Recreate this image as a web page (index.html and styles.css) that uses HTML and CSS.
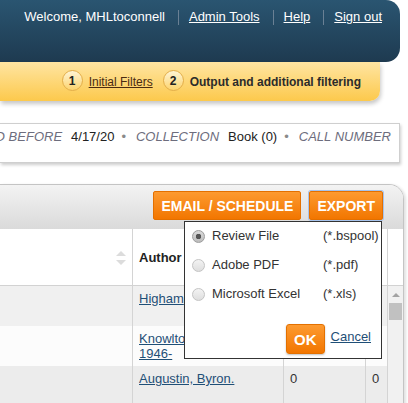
FILE: index.html
```html
<!DOCTYPE html>
<html>
<head>
    <meta name="viewport" content="width=device-width, initial-scale=1.0">
    <title>Report Output</title>
    <link rel="stylesheet" href="styles.css">
</head>
<body>
    <div class="topbar">
        <span>Welcome, MHLtoconnell</span>
        <span class="sep"></span>
        <a href="#">Admin Tools</a>
        <span class="sep"></span>
        <a href="#">Help</a>
        <span class="sep"></span>
        <a href="#">Sign out</a>
    </div>

    <div class="steps">
        <span class="step-num">1</span>
        <a href="#" class="step-link">Initial Filters</a>
        <span class="step-num">2</span>
        <span class="step-current">Output and additional filtering</span>
    </div>

    <div class="filters">
        <span class="label">CREATED BEFORE</span><span class="value">4/17/20</span><span class="dot">&bull;</span>
        <span class="label">COLLECTION</span><span class="value">Book (0)</span><span class="dot">&bull;</span>
        <span class="label">CALL NUMBER</span>
    </div>

    <div class="panel">
        <div class="toolbar">
            <button class="btn">EMAIL / SCHEDULE</button>
            <button class="btn focused">EXPORT</button>
        </div>

        <table class="results">
            <thead>
                <tr>
                    <th class="c1"><span class="sort"><i class="up"></i><i class="down"></i></span></th>
                    <th class="c2">Author</th>
                    <th class="c3"></th>
                    <th class="c4"></th>
                    <th class="c5"></th>
                </tr>
            </thead>
            <tbody>
                <tr class="odd">
                    <td></td>
                    <td><a href="#">Higham</a></td>
                    <td></td>
                    <td></td>
                    <td class="scroll" rowspan="3">
                        <div class="scroll-up"></div>
                        <div class="scroll-thumb"></div>
                    </td>
                </tr>
                <tr class="even">
                    <td></td>
                    <td><a href="#">Knowlto<br>1946-</a></td>
                    <td></td>
                    <td></td>
                </tr>
                <tr class="odd alt">
                    <td></td>
                    <td><a href="#">Augustin, Byron.</a></td>
                    <td>0</td>
                    <td>0</td>
                </tr>
            </tbody>
        </table>

        <div class="export-menu">
            <div class="options">
                <label class="option"><span class="radio checked"></span><span class="name">Review File</span><span>(*.bspool)</span></label>
                <label class="option"><span class="radio"></span><span class="name">Adobe PDF</span><span>(*.pdf)</span></label>
                <label class="option"><span class="radio"></span><span class="name">Microsoft Excel</span><span>(*.xls)</span></label>
            </div>
            <div class="menu-actions">
                <button class="btn ok">OK</button>
                <a href="#" class="cancel">Cancel</a>
            </div>
        </div>
    </div>
</body>
</html>
```

FILE: styles.css
```css
body {
    margin: 0;
    width: 408px;
    height: 403px;
    overflow: hidden;
    font-family: "Liberation Sans", Arial, sans-serif;
    font-size: 13px;
    color: #333;
    background-color: #fff;
}
a {
    color: #1f4f77;
}

/* top navigation */
.topbar {
    box-sizing: border-box;
    width: 400px;
    height: 62px;
    padding: 9px 18px 0 0;
    display: flex;
    justify-content: flex-end;
    align-items: flex-start;
    line-height: 16px;
    color: #fff;
    background: linear-gradient(#2a5571, #1e3a50);
    border-radius: 0 14px 14px 0;
}
.topbar a {
    color: #fff;
}
.sep {
    width: 1px;
    height: 15px;
    margin: 1px 10px 0 13px;
    background-color: #6a8094;
}

/* wizard steps */
.steps {
    box-sizing: border-box;
    width: 380px;
    height: 39px;
    padding-right: 19px;
    display: flex;
    justify-content: flex-end;
    align-items: center;
    font-size: 12px;
    background: linear-gradient(#ffe5a2, #fcc94c);
    border-radius: 0 0 10px 0;
    box-shadow: 1px 3px 4px rgba(0, 0, 0, 0.22);
}
.step-num {
    box-sizing: border-box;
    width: 21px;
    height: 21px;
    margin: -2px 6px 0 0;
    display: flex;
    align-items: center;
    justify-content: center;
    border: 1px solid #e3ae4a;
    border-radius: 50%;
    background: linear-gradient(#fff4d4, #fcd46e);
    font-weight: bold;
    color: #222;
}
.step-link {
    margin-right: 10px;
    color: #4a2b12;
}
.step-current {
    font-weight: bold;
    color: #2b2b2b;
}

/* applied filters */
.filters {
    box-sizing: border-box;
    width: 400px;
    height: 40px;
    margin-top: 22px;
    padding: 5px 8px 0 0;
    display: flex;
    justify-content: flex-end;
    align-items: flex-start;
    line-height: 16px;
    white-space: nowrap;
    overflow: hidden;
    border: 1px solid #cfcfcf;
    border-left: none;
    box-shadow: 1px 2px 3px rgba(0, 0, 0, 0.2);
}
.label {
    font-style: italic;
    color: #6d6d7d;
}
.value {
    margin-left: 9px;
    color: #222;
}
.dot {
    margin: 0 10px 0 7px;
    color: #8a8a8a;
}

/* results panel */
.panel {
    position: relative;
    box-sizing: border-box;
    width: 404px;
    margin-top: 21px;
    border: 1px solid #c4c4c4;
    border-left: none;
    border-radius: 0 15px 0 0;
    overflow: hidden;
    box-shadow: 2px 1px 3px rgba(0, 0, 0, 0.12);
}
.toolbar {
    box-sizing: border-box;
    height: 44px;
    padding: 6px 20px 0 0;
    display: flex;
    justify-content: flex-end;
    align-items: flex-start;
    gap: 8px;
    background: linear-gradient(#f3f3f3, #dadada);
}
.btn {
    box-sizing: border-box;
    height: 29px;
    padding: 0 7px;
    border: 1px solid #e37000;
    border-radius: 2px;
    background: linear-gradient(#fd9a30, #f27600);
    color: #fff;
    font-family: inherit;
    font-size: 14px;
    font-weight: bold;
    cursor: pointer;
}
.btn.focused {
    box-shadow: 0 0 0 1px #a6c3ec;
}

.results {
    width: 403px;
    table-layout: fixed;
    border-collapse: separate;
    border-spacing: 0;
}
.results th,
.results td {
    box-sizing: border-box;
    border-right: 1px solid #d4d4d4;
}
.results th {
    height: 57px;
    padding: 0 6px;
    border-bottom: 1px solid #d2d2d2;
    background-color: #fff;
    text-align: left;
    vertical-align: middle;
    color: #222;
}
.results .c1 { width: 133px; text-align: right; }
.results .c2 { width: 151px; }
.results .c3 { width: 82px; }
.results .c4 { width: 22px; }
.results .c5 { width: 15px; border-right: none; }
.results td {
    height: 40px;
    padding: 5px 6px;
    line-height: 15px;
    vertical-align: top;
}
.odd td { background-color: #f0f0f0; }
.even td { background-color: #fcfcfc; }
.alt td { background-color: #ececec; }

.sort {
    display: inline-flex;
    flex-direction: column;
    gap: 4px;
    vertical-align: middle;
}
.sort i {
    width: 0;
    height: 0;
    border-left: 5px solid transparent;
    border-right: 5px solid transparent;
}
.sort .up { border-bottom: 5px solid #dcdcdc; }
.sort .down { border-top: 5px solid #dcdcdc; }

.results td.scroll {
    padding: 7px 0 0;
    border-right: none;
    background-color: #f1f1f1;
}
.scroll-up {
    width: 0;
    height: 0;
    margin: 0 auto;
    border-left: 4px solid transparent;
    border-right: 4px solid transparent;
    border-bottom: 4px solid #a3a3a3;
}
.scroll-thumb {
    height: 17px;
    margin: 6px 1px 0 1px;
    background-color: #c1c1c1;
}

/* export dropdown */
.export-menu {
    position: absolute;
    top: 36px;
    left: 184px;
    box-sizing: border-box;
    width: 198px;
    height: 138px;
    padding: 6px 10px 0 7px;
    border: 1px solid #333;
    background-color: #fff;
}
.options {
    display: flex;
    flex-direction: column;
    gap: 13px;
    line-height: 16px;
    color: #333;
}
.option {
    display: flex;
    align-items: center;
}
.radio {
    box-sizing: border-box;
    flex: none;
    width: 13px;
    height: 13px;
    margin-right: 7px;
    border: 1px solid #c4c4c4;
    border-radius: 50%;
    background: linear-gradient(#f3f3f3, #dedede);
}
.radio.checked {
    border-color: #9c9c9c;
    background: radial-gradient(circle, #555 0 2.5px, transparent 3px), linear-gradient(#dadada, #bcbcbc);
}
.name {
    width: 111px;
    flex: none;
}
.menu-actions {
    margin-top: 22px;
    display: flex;
    justify-content: flex-end;
    align-items: center;
    gap: 6px;
}
.btn.ok {
    height: 30px;
    font-size: 15px;
    border-radius: 3px;
    box-shadow: 0 1px 2px rgba(0, 0, 0, 0.25);
}
.cancel {
    padding-bottom: 4px;
    line-height: 16px;
}
```
